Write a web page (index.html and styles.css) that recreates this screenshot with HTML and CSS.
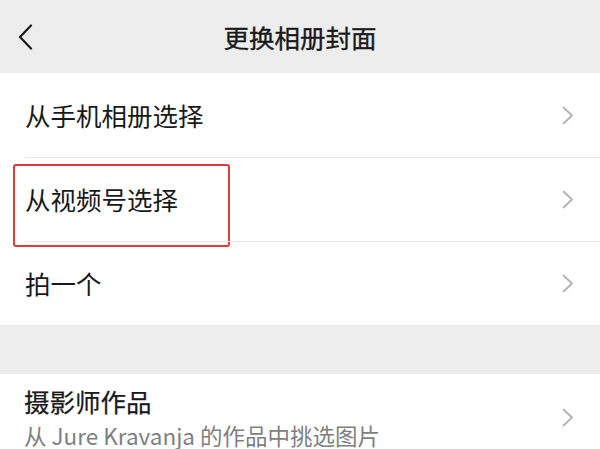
FILE: index.html
```html
<!DOCTYPE html>
<html lang="zh-CN">
<head>
<meta charset="utf-8">
<title>更换相册封面</title>
<link rel="stylesheet" href="styles.css">
</head>
<body>
<div class="page">
  <header class="topbar">
    <span class="back">
      <svg width="16" height="26" viewBox="0 0 16 26"><path d="M14 1.5 L3 13 L14 24.5" fill="none" stroke="#1a1a1a" stroke-width="2.2" stroke-linecap="round" stroke-linejoin="round"/></svg>
    </span>
    <h1 class="title">更换相册封面</h1>
  </header>

  <section class="group">
    <div class="row">
      <span class="label">从手机相册选择</span>
      <svg class="chev" width="12" height="19" viewBox="0 0 12 19"><path d="M1.5 1.5 L10 9.5 L1.5 17.5" fill="none" stroke="#b2b2b2" stroke-width="1.8" stroke-linecap="round" stroke-linejoin="round"/></svg>
    </div>
    <div class="row marked">
      <span class="label">从视频号选择</span>
      <svg class="chev" width="12" height="19" viewBox="0 0 12 19"><path d="M1.5 1.5 L10 9.5 L1.5 17.5" fill="none" stroke="#b2b2b2" stroke-width="1.8" stroke-linecap="round" stroke-linejoin="round"/></svg>
      <span class="highlight"></span>
    </div>
    <div class="row">
      <span class="label">拍一个</span>
      <svg class="chev" width="12" height="19" viewBox="0 0 12 19"><path d="M1.5 1.5 L10 9.5 L1.5 17.5" fill="none" stroke="#b2b2b2" stroke-width="1.8" stroke-linecap="round" stroke-linejoin="round"/></svg>
    </div>
  </section>

  <section class="group second">
    <div class="row tall">
      <div class="texts">
        <span class="label strong">摄影师作品</span>
        <span class="sub">从 Jure Kravanja 的作品中挑选图片</span>
      </div>
      <svg class="chev" width="12" height="19" viewBox="0 0 12 19"><path d="M1.5 1.5 L10 9.5 L1.5 17.5" fill="none" stroke="#b2b2b2" stroke-width="1.8" stroke-linecap="round" stroke-linejoin="round"/></svg>
    </div>
  </section>
</div>
</body>
</html>
```

FILE: styles.css
```css
* { box-sizing: border-box; margin: 0; padding: 0; }
html, body { width: 600px; height: 449px; overflow: hidden; }
body {
  background: #ededed;
  font-family: "Noto Sans CJK SC", "Noto Sans", sans-serif;
  color: #191919;
}
.page { display: flex; flex-direction: column; }

.topbar {
  height: 73px;
  display: flex;
  align-items: center;
  justify-content: center;
  position: relative;
  background: #ededed;
}
.back {
  position: absolute;
  left: 17px;
  top: 24px;
  display: flex;
}
.title {
  font-size: 25.5px;
  font-weight: 400;
  -webkit-text-stroke: 0.35px #191919;
  color: #191919;
  line-height: 1;
}

.group {
  background: #fff;
  display: flex;
  flex-direction: column;
}
.group.second { margin-top: 49px; }

.row {
  height: 84px;
  display: flex;
  align-items: center;
  justify-content: space-between;
  padding: 0 26px 0 25px;
  position: relative;
}
.row + .row::before {
  content: "";
  position: absolute;
  left: 25px;
  right: 0;
  top: 0;
  height: 1px;
  background: #e8e8e8;
}
.label {
  font-size: 25.5px;
  line-height: 1;
}
.chev { display: block; }

.highlight {
  position: absolute;
  left: 13px;
  top: 7px;
  width: 217px;
  height: 83px;
  border: 2px solid #e4393c;
  border-radius: 3px;
  pointer-events: none;
}

.row.tall { height: 86px; padding-left: 24px; }
.texts {
  display: flex;
  flex-direction: column;
  gap: 10px;
  align-self: flex-start;
  padding-top: 14px;
}
.label.strong { -webkit-text-stroke: 0.25px #191919; }
.sub { font-size: 22.5px; color: #7f7f7f; line-height: 1; }
```
